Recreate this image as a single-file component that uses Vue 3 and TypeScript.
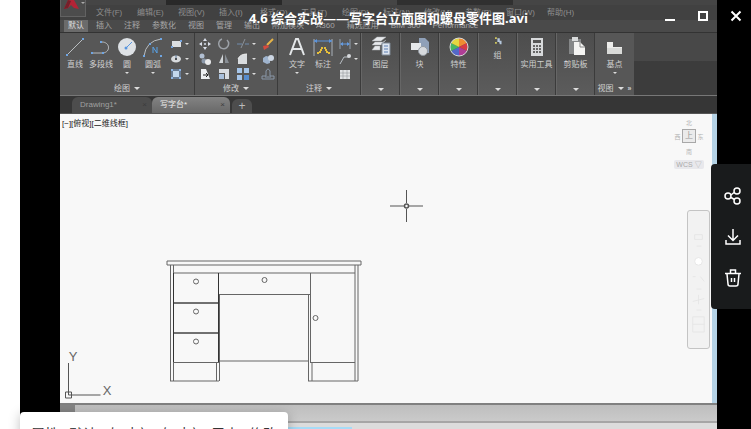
<script setup lang="ts">
interface Tool {
  icon: string
  label: string
  menu?: boolean
}
interface Group {
  name: string
  kind: string
  tools: Tool[]
  stacks: Tool[][]
}

const menus: string[] = ['文件(F)', '编辑(E)', '视图(V)', '插入(I)', '格式(O)', '工具(T)', '绘图(D)', '标注(N)', '修改(M)', '参数(P)', '窗口(W)', '帮助(H)']
const ribbonTabs: string[] = ['默认', '插入', '注释', '参数化', '视图', '管理', '输出', '附加模块', 'A360', '精选应用', 'BIM 360', 'Performance']

const groups: Group[] = [
  {
    name: '绘图',
    kind: 'draw',
    tools: [
      { icon: 'line', label: '直线' },
      { icon: 'polyline', label: '多段线' },
      { icon: 'circle', label: '圆', menu: true },
      { icon: 'arc', label: '圆弧', menu: true },
    ],
    stacks: [[
      { icon: 'rect', label: '矩形', menu: true },
      { icon: 'ellipse', label: '椭圆', menu: true },
      { icon: 'hatch', label: '图案填充', menu: true },
    ]],
  },
  {
    name: '修改',
    kind: 'modify',
    tools: [],
    stacks: [
      [{ icon: 'move', label: '移动' }, { icon: 'copy', label: '复制' }, { icon: 'stretch', label: '拉伸' }],
      [{ icon: 'rotate', label: '旋转' }, { icon: 'mirror', label: '镜像' }, { icon: 'scale', label: '缩放' }],
      [{ icon: 'trim', label: '修剪', menu: true }, { icon: 'fillet', label: '圆角', menu: true }, { icon: 'array', label: '阵列', menu: true }],
      [{ icon: 'erase', label: '删除' }, { icon: 'explode', label: '分解' }, { icon: 'offset', label: '偏移' }],
    ],
  },
  {
    name: '注释',
    kind: 'annotate',
    tools: [
      { icon: 'text', label: '文字', menu: true },
      { icon: 'dimension', label: '标注' },
    ],
    stacks: [[
      { icon: 'linear', label: '线性', menu: true },
      { icon: 'leader', label: '引线', menu: true },
      { icon: 'table', label: '表格' },
    ]],
  },
]

const panels: Tool[] = [
  { icon: 'layers', label: '图层' },
  { icon: 'block', label: '块' },
  { icon: 'wheel', label: '特性' },
  { icon: 'group', label: '组' },
  { icon: 'calc', label: '实用工具' },
  { icon: 'paste', label: '剪贴板' },
]

const alignActions: string[] = ['属性', '默认', '左对齐', '右对齐', '居中', '修改']

const big: Record<string, string> = {
  line: '<path d="M3 19 19 3" stroke="#b9bdc0" fill="none"/><path d="M2 18h2v2H2zM18 2h2v2h-2z" fill="#6fa5e2"/>',
  polyline: '<path d="M2 17h11c8-1 7-11-1-11" stroke="#b9bdc0" fill="none"/><path d="M1 16h2v2H1zM12 16h2v2h-2zM10 5h2v2h-2z" fill="#6fa5e2"/>',
  circle: '<circle cx="11" cy="11" r="9" fill="#dde1e5"/><path d="m10 12 6-6" stroke="#5795df" stroke-width="1"/><circle cx="10" cy="12" r="1.5" fill="#5795df"/>',
  arc: '<path d="M2 20Q4 5 19 3" stroke="#b9bdc0" fill="none"/><path d="M1 19h2v2H1zM18 2h2v2h-2zM7 7h2v2H7zM18 19h2v2h-2z" fill="#6fa5e2"/><path d="M11 17v-6l4 6v-6" stroke="#58a2e7" fill="none"/>',
  text: '<path d="M4 19 10 3h2l6 16M6.500 13h9" stroke="#e4e7e9" stroke-width="2" fill="none"/>',
  dimension: '<path d="M2 3v17M20 3v17" stroke="#a9b1ba"/><path d="M2 5h18" stroke="#5c94dc"/><path d="m2 5 3-2v4zM20 5l-3-2v4z" fill="#5c94dc"/><path d="M6 18v-2h2v-2h2v-2h3v2h2v2h2v2" stroke="#e6bf3b" stroke-width="2" stroke-dasharray="2 1" fill="none"/>',
  layers: '<path d="m2 5 5-4h9l-5 4zM2 9l3-3h8l3-2-5 5zM2 14l3-4h5v4z" fill="#e7e9ec" stroke="#a9adb1" stroke-width=".5"/><path d="M12 7h8v12h-8z" fill="#dce4ef" stroke="#7d8794"/><path d="M14 10h4M14 13h4M14 16h4" stroke="#5d7fb0"/>',
  block: '<path d="M10 2h6l4 4v11H10z" fill="#8fa0b8"/><path d="M2 7h10v7H2z" fill="#e6e8ea"/><circle cx="14" cy="15" r="4.500" fill="#d7dade" stroke="#9299a0"/>',
  wheel: '<path d="M11 11V2a9 9 0 0 1 8 5z" fill="#f08b32"/><path d="m11 11 8-4a9 9 0 0 1 0 8z" fill="#d83a45"/><path d="m11 11 8 4a9 9 0 0 1-8 5z" fill="#af3e96"/><path d="M11 11v9a9 9 0 0 1-8-5z" fill="#5368c8"/><path d="m11 11-8 4a9 9 0 0 1 0-8z" fill="#49b564"/><path d="M11 11 3 7a9 9 0 0 1 8-5z" fill="#e5d640"/><circle cx="11" cy="11" r="9" fill="none" stroke="#d6d8d9"/>',
  group: '<path d="M6 2h3v3H6zM6 10h3v3H6z" fill="#d1c75d"/><path d="M10 4h4v4h3v6h-3l-1-4h-3z" fill="#b5c7dc"/>',
  calc: '<path d="M5 2h12v18H5z" fill="#d7d9db"/><path d="M7 4h8v3H7z" fill="#555"/><path d="M7 10h8M7 13h8M7 16h8" stroke="#666" stroke-width="2" stroke-dasharray="2 1"/>',
  paste: '<path d="M4 3h12v15H4z" fill="#858788"/><path d="M7 1h6v4H7z" fill="#d8dadb"/><path d="M9 6h6l5 5v8H9z" fill="#f4f4f2"/><path d="M15 6v5h5" stroke="#888" fill="none"/>',
  base: '<path d="M3 6h6v5h9v7H3z" fill="#ececea"/><path d="M3 12h15v6H3z" fill="#d9dad8"/>',
}

const small: Record<string, string> = {
  rect: '<path d="M3 4h9v6H3z" fill="#dcdfe2"/><path d="M2 9h2v2H2zM11 3h2v2h-2z" fill="#77a6e0"/>',
  ellipse: '<ellipse cx="7" cy="7" rx="5" ry="3.500" fill="#d8dbde"/><path d="M7 3v5" stroke="#5d789a"/><circle cx="7" cy="7" r="1" fill="#333"/>',
  hatch: '<path d="M4 4h6v6H4z" fill="#c3d8ee"/><path d="M3 3h8v8H3z" stroke="#7aa0cf" fill="none"/><path d="M2 2h2v2H2zM10 2h2v2h-2zM2 10h2v2H2zM10 10h2v2h-2z" fill="#8fb6e4"/>',
  move: '<path d="M7 1 9 4H5zM7 13 5 10h4zM1 7l3-2v4zM13 7l-3 2V5z" fill="#d9dfeb"/><circle cx="7" cy="7" r="1" fill="#d9dfeb"/>',
  copy: '<circle cx="4" cy="4" r="2.500" fill="#b1bfd2"/><circle cx="6" cy="9" r="2.500" fill="#8b98a9"/><circle cx="10" cy="10" r="3" fill="#e8e9eb"/>',
  stretch: '<path d="M3 2h5l4 10H3z" fill="#eef0f2"/><path d="M5 8h4M8 6l2 2-2 2" stroke="#222" fill="none"/>',
  rotate: '<path d="M10 3a5 5 0 1 1-5-1" stroke="#9da2a8" stroke-width="1.5" fill="none"/>',
  mirror: '<path d="M6 2v9H2z" fill="#d1d5d8"/><path d="M8 2v9h4z" fill="#888e95"/>',
  scale: '<path d="M2 2h10v10H8V6H2z" fill="#d8dce1"/><path d="M2 7h5v5H2z" fill="#a9c0dc"/>',
  trim: '<path d="M1 7h5M9 7h4" stroke="#718cad"/><path d="m5 11 4-9" stroke="#8a9199"/>',
  fillet: '<path d="M2 12V7q2-5 9-5v10z" fill="#d9dcdf"/><path d="M2 7q2-5 9-5" stroke="#eee" fill="none"/>',
  array: '<path d="M1 1h5v5H1zM8 1h5v5H8zM1 8h5v5H1z" fill="#a6c5e9"/><path d="M8 8h5v5H8z" fill="#568cce"/>',
  erase: '<path d="m6 8 6-6" stroke="#e5b448" stroke-width="2"/><path d="m2 9 5-1 1 2-5 3z" fill="#d24b3f"/>',
  explode: '<path d="m2 6 3-2 4 1v6l-3 1-4-2z" fill="#9fb4ce"/><circle cx="10" cy="6" r="3" fill="#ccd6e3"/>',
  offset: '<path d="M1 12h12V9H9V4Q7 0 5 4v5H1zM4 10h6" stroke="#8a98a9" fill="none"/>',
  linear: '<path d="M2 2v10M12 2v10" stroke="#94a0ad"/><path d="M3 7h8" stroke="#659be0"/><path d="m2 7 3-2v4zM12 7 9 5v4z" fill="#659be0"/>',
  leader: '<path d="m2 12 4-7h5" stroke="#b8bec4" fill="none"/><circle cx="11" cy="4" r="2" fill="#d7dadd"/>',
  table: '<path d="M2 3h10v9H2z" fill="#e1e3e5"/><path d="M2 6h10M5 3v9M9 3v9M2 9h10" stroke="#85898d" stroke-width=".5"/>',
}
</script>

<template>
  <main class="page">
    <section class="viewer">
      <div class="frame">
        <header class="app-head">
          <div class="logo">
            <svg viewBox="0 0 25 17" aria-hidden="true"><path d="M3 9 7 0h6l5 9-5-1-3-3-3 3z" fill="#b32436" /><path d="m7 0-4 9 4-1 3-7z" fill="#74202a" /><path d="M20 2h4l-2 2z" fill="#aaa" /></svg>
          </div>
          <div class="head-rows">
            <div class="quick"><i></i><span class="workspace"></span><span class="search"></span></div>
            <nav class="menus"><button v-for="m in menus" :key="m">{{ m }}</button></nav>
          </div>
        </header>
        <nav class="ribbon-tabs">
          <button v-for="(t, i) in ribbonTabs" :key="t" :class="{ active: i === 0 }">{{ t }}</button>
        </nav>
        <div class="ribbon">
          <section v-for="g in groups" :key="g.name" class="group">
            <div class="group-body" :class="g.kind">
              <div v-if="g.tools.length" class="tools">
                <button v-for="t in g.tools" :key="t.label" class="tool">
                  <svg viewBox="0 0 22 22" aria-hidden="true" v-html="big[t.icon]"></svg>
                  <span>{{ t.label }}</span>
                  <i v-if="t.menu" class="caret tiny"></i>
                </button>
              </div>
              <div v-for="(s, i) in g.stacks" :key="i" class="stack">
                <button v-for="b in s" :key="b.label" :aria-label="b.label">
                  <svg viewBox="0 0 14 14" aria-hidden="true" v-html="small[b.icon]"></svg>
                  <i v-if="b.menu" class="caret tiny"></i>
                </button>
              </div>
            </div>
            <button class="group-name">{{ g.name }}<i class="caret"></i></button>
          </section>
          <section v-for="p in panels" :key="p.label" class="panel">
            <button class="tool" :class="{ compact: p.icon === 'group' }">
              <svg viewBox="0 0 22 22" aria-hidden="true" v-html="big[p.icon]"></svg>
              <span>{{ p.label }}</span>
            </button>
            <i class="caret"></i>
          </section>
          <section class="panel last">
            <button class="tool">
              <svg viewBox="0 0 22 22" aria-hidden="true" v-html="big.base"></svg>
              <span>基点</span>
              <i class="caret tiny"></i>
            </button>
            <button class="group-name">视图<i class="caret"></i><b>»</b></button>
          </section>
        </div>
        <nav class="doc-tabs">
          <button>Drawing1*<span>×</span></button>
          <button class="current">写字台*<span>×</span></button>
          <button class="add" aria-label="新建">+</button>
        </nav>
        <div class="canvas">
          <svg class="drawing" viewBox="60 114 652 289" role="img" aria-label="写字台立面图">
            <g class="ink">
              <path d="M167 261h194v4H167zM170.500 265v116M173.500 265v116M355 265v116M358 265v116M173 273h182" />
              <path d="M218.500 273v89M219.500 294v87M216.500 362v19M310.500 273v89M308.500 294v87M312 362v19" />
              <path d="M174 303h45M174 333h45M174 362.500h45M219 294.500h91M219 361h90M310 362.500h45M170 381h49M308 381h50" />
              <circle cx="196" cy="281.500" r="2.500" /><circle cx="196" cy="311.500" r="2.500" /><circle cx="196" cy="341.500" r="2.500" />
              <circle cx="264.500" cy="280" r="2.500" /><circle cx="315.500" cy="318" r="2.500" />
            </g>
            <path class="dark" d="M173.500 273v89M174 303h44M174 333h44M218.500 273v89" />
            <g class="cross">
              <path d="M390 206h14M409 206h14M406.500 190v13M406.500 209v13" />
              <circle cx="406.500" cy="206" r="2" stroke-width="1.500" />
            </g>
            <g class="cross">
              <path d="M68.500 363v32h32M65.500 392h6v6h-6z" />
            </g>
            <text x="73" y="361" class="axis">Y</text>
            <text x="107" y="395" class="axis">X</text>
          </svg>
          <p class="view-label">[−][俯视][二维线框]</p>
          <div class="cube">
            <span class="n">北</span><span class="w">西</span><b>上</b><span class="e">东</span><span class="s">南</span>
            <em>WCS ▽</em>
          </div>
          <div class="nav-bar">
            <svg viewBox="0 0 22 138" aria-hidden="true"><g fill="none" stroke="#e6e6e6"><path d="M7 27v-5h8v5zM9 34h5M9 79h5M9 101h5" /><circle cx="11" cy="50" r="4" fill="#fff" /><path d="M5 66h3M13 66l4 5M5 92l12-3M11 85v10M5 108h12v16H5zM5 116h12" /></g></svg>
          </div>
        </div>
        <footer class="status"><i></i></footer>
        <div class="command"></div>
      </div>

      <div class="title-bar">
        <h1>4.6 综合实战——写字台立面图和螺母零件图.avi</h1>
        <div class="window-buttons">
          <button aria-label="最小化"><svg viewBox="0 0 12 12"><path d="M1 10h10" stroke-width="2" /></svg></button>
          <button aria-label="最大化"><svg viewBox="0 0 12 12"><path d="M2 2h8v8H2z" stroke-width="2" /></svg></button>
          <button aria-label="关闭"><svg viewBox="0 0 12 12"><path d="m1.500 1.500 9 9m0-9-9 9" stroke-width="2" /></svg></button>
        </div>
      </div>

      <aside class="side">
        <button aria-label="分享"><svg viewBox="0 0 18 18"><circle cx="4" cy="9" r="3" /><circle cx="13" cy="4" r="3" /><circle cx="13" cy="14" r="3" /><path d="m7 8 3-2.500M7 10.500l3.500 2" /></svg></button>
        <button aria-label="下载"><svg viewBox="0 0 18 18"><path d="M9 1v11M4 7.500l5 5 5-5M2 12v4h14v-4" /></svg></button>
        <button aria-label="删除"><svg viewBox="0 0 18 18"><path d="M1 4.500h16M6.500 4V1h5v3M3 5l1 10q0 2 2 2h6q2 0 2-2l1-10M7.500 9v4M10.500 9v4" /></svg></button>
      </aside>

      <div class="popup">
        <button v-for="a in alignActions" :key="a">{{ a }}</button>
      </div>
    </section>
  </main>
</template>

<style>
body {
  margin: 0;
  background: #fff;
}
</style>

<style scoped>
* {
  box-sizing: border-box;
}
.page {
  height: 100vh;
  padding-left: 20px;
  overflow: hidden;
  font-family: "Liberation Sans", "Noto Sans CJK SC", sans-serif;
}
.viewer {
  position: relative;
  height: 100%;
  padding: 0 34px 0 40px;
  background: #000;
}
.frame {
  display: flex;
  flex-direction: column;
  height: 100%;
  overflow: hidden;
  background: #3a3a3a;
}
button {
  margin: 0;
  padding: 0;
  border: 0;
  background: none;
  color: inherit;
  font: inherit;
  white-space: nowrap;
}
svg {
  display: block;
}
.app-head {
  display: flex;
  flex: none;
  height: 20px;
  background: #414141;
}
.logo {
  width: 26px;
  height: 17px;
  border: 1px solid #626262;
  border-top: 0;
  background: #4c4c4c;
}
.logo svg {
  width: 25px;
}
.head-rows {
  flex: 1;
}
.quick {
  display: flex;
  justify-content: space-between;
  height: 5px;
  background: #454545;
}
.quick i {
  width: 80px;
}
.quick .workspace {
  width: 116px;
  background: #292929;
}
.quick .search {
  width: 116px;
  margin: 0 204px 0 auto;
  background: #303030;
}
.menus {
  display: grid;
  grid-template-columns: repeat(12, 41px);
  padding-left: 10px;
  color: #8e8e8e;
  font-size: 8px;
  line-height: 15px;
}
.menus button {
  text-align: left;
}
.ribbon-tabs {
  display: flex;
  flex: none;
  gap: 12px;
  height: 12px;
  padding-left: 8px;
  background: #4a4a4a;
  color: #a6a6a6;
  font-size: 8px;
  line-height: 12px;
}
.ribbon-tabs .active {
  margin: 0 -4px;
  padding: 0 4px;
  background: #6b6b6b;
  color: #dedede;
}
.ribbon {
  display: flex;
  flex: none;
  height: 64px;
  border-top: 1px solid #333;
  border-bottom: 1px solid #777;
  background: linear-gradient(#484848 0 45%, #3c3c3c 46%);
  color: #d0d0d0;
  font-size: 8px;
  line-height: 10px;
}
.group,
.panel {
  display: flex;
  flex-direction: column;
  justify-content: space-between;
  border-right: 1px solid #3b3b3b;
  background: #575757;
}
.group-body {
  display: flex;
  gap: 5px;
  padding: 3px 2px 0 3px;
}
.draw {
  gap: 3px;
  padding: 3px 5px 0 2px;
}
.annotate {
  gap: 2px;
  padding-left: 6px;
}
.tools {
  display: flex;
}
.tool {
  display: flex;
  flex-direction: column;
  align-items: center;
  width: 26px;
}
.tool svg {
  width: 22px;
  height: 22px;
}
.tool span {
  margin-top: 2px;
}
.stack {
  display: grid;
  grid-template-rows: repeat(3, 15px);
}
.stack button {
  display: flex;
  align-items: center;
  gap: 2px;
}
.stack svg {
  width: 14px;
  height: 14px;
}
.caret {
  display: block;
  border: 3px solid transparent;
  border-top-color: #ddd;
  border-bottom: 0;
}
.tiny {
  border-width: 2px;
  border-bottom: 0;
}
.tool .tiny {
  margin-top: 2px;
}
.group-name {
  display: flex;
  align-items: center;
  justify-content: center;
  gap: 4px;
  height: 13px;
}
.panel {
  align-items: center;
  width: 39px;
  padding-top: 3px;
  border-left: 1px solid #666;
  background: linear-gradient(#4d4d4d, #5c5c5c);
}
.panel > .caret {
  margin-bottom: 4px;
}
.panel .compact svg {
  width: 18px;
  height: 13px;
}
.last {
  border: 0;
  background: #575757;
}
.last b {
  font-size: 7px;
}
.doc-tabs {
  display: flex;
  flex: none;
  align-items: flex-end;
  height: 18px;
  padding-left: 12px;
  background: #363636;
  color: #a0a0a0;
  font-size: 8px;
  line-height: 16px;
  border-bottom: 1px solid #555;
}
.doc-tabs button {
  display: flex;
  justify-content: space-between;
  width: 80px;
  height: 16px;
  padding: 0 5px 0 8px;
  border-radius: 6px 6px 0 0;
  background: #4d4d4d;
}
.doc-tabs span {
  color: #3c3c3c;
}
.doc-tabs .current {
  width: 78px;
  background: linear-gradient(#838383, #686868);
  color: #ededed;
}
.doc-tabs .add {
  justify-content: center;
  width: 20px;
  height: 14px;
  margin-left: 2px;
  padding: 0;
  color: #bbb;
  font-size: 12px;
  line-height: 14px;
}
.canvas {
  position: relative;
  flex: 1;
  min-height: 0;
  border-right: 5px solid #b4d2e5;
  background: #f8f8f8;
}
.drawing {
  width: 100%;
  height: 100%;
}
.ink {
  fill: none;
  stroke: #666;
}
.dark {
  fill: none;
  stroke: #333;
}
.cross {
  fill: none;
  stroke: #555;
}
.axis {
  fill: #666;
  font-size: 13px;
  text-anchor: middle;
}
.view-label {
  position: absolute;
  top: 4px;
  left: 2px;
  margin: 0;
  color: #222;
  font-size: 8px;
  line-height: 11px;
}
.cube {
  position: absolute;
  top: 3px;
  right: 8px;
  display: grid;
  grid-template: 11px 16px 14px 12px / 7px 16px 7px;
  place-items: center;
  color: #b4b4b4;
  font-size: 6px;
}
.cube .n,
.cube .s {
  grid-column: 1 / 4;
}
.cube b {
  width: 14px;
  height: 14px;
  border: 1px solid #a8a8a8;
  background: #ebebeb;
  color: #999;
  font-size: 8px;
  font-weight: 400;
  line-height: 12px;
  text-align: center;
}
.cube em {
  grid-column: 1 / 4;
  padding: 0 2px;
  border-radius: 2px;
  background: #e8e8ec;
  color: #aaa;
  font-size: 7px;
  font-style: normal;
  line-height: 9px;
  white-space: nowrap;
}
.nav-bar {
  position: absolute;
  top: 96px;
  right: 2px;
  border: 1px solid #c4c4c4;
  border-radius: 3px;
  background: #f2f2f2;
}
.nav-bar svg {
  width: 21px;
  height: 137px;
}
.status {
  flex: none;
  height: 20px;
  border-top: 2px solid #808080;
  border-bottom: 2px solid #a6a6a6;
  background: linear-gradient(#bebebe, #cacaca);
}
.status i {
  display: block;
  width: 15px;
  height: 8px;
  background: #858585;
}
.command {
  flex: none;
  height: 6px;
  background: linear-gradient(90deg, #a7dbf6 292px, #dcdcdc 292px) 0 4px no-repeat #dcdcdc;
}
.title-bar {
  position: absolute;
  inset: 0 0 auto 0;
  display: grid;
  grid-template-columns: 104px 1fr 98px;
  align-items: center;
  height: 36px;
  color: #fff;
}
.title-bar h1 {
  grid-column: 2;
  margin: 0;
  font-family: "Open Sans", "Noto Sans CJK SC", sans-serif;
  font-size: 13px;
  font-weight: 700;
  line-height: 20px;
  text-align: center;
  white-space: nowrap;
}
.window-buttons {
  display: flex;
  justify-content: flex-end;
  gap: 21px;
  padding: 0 9px 4px 0;
}
.window-buttons svg {
  width: 12px;
  height: 12px;
  fill: none;
  stroke: #fff;
}
.side {
  position: absolute;
  top: 164px;
  right: 0;
  display: flex;
  flex-direction: column;
  align-items: center;
  justify-content: center;
  gap: 23px;
  width: 40px;
  height: 145px;
  padding-left: 4px;
  border-radius: 4px 0 0 4px;
  background: #191b1c;
}
.side svg {
  width: 18px;
  height: 18px;
  fill: none;
  stroke: #fff;
  stroke-width: 1.500;
}
.popup {
  position: absolute;
  bottom: -27px;
  left: 0;
  display: flex;
  gap: 10px;
  align-items: center;
  height: 44px;
  padding: 0 11px;
  border-radius: 4px;
  background: #fff;
  box-shadow: 0 2px 12px rgba(0, 0, 0, 0.25);
  color: #333;
  font-size: 14px;
  line-height: 20px;
}
</style>
